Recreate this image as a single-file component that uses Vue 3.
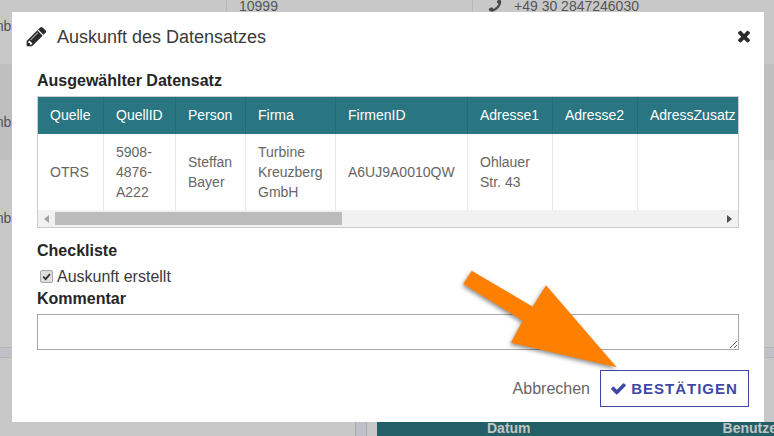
<script setup>
const columns = ['Quelle', 'QuellID', 'Person', 'Firma', 'FirmenID', 'Adresse1', 'Adresse2', 'AdressZusatz']
const widths = [66, 72, 70, 90, 132, 85, 85, 120]
const cells = ['OTRS', '5908-4876-A222', 'Steffan Bayer', 'Turbine Kreuzberg GmbH', 'A6UJ9A0010QW', 'Ohlauer Str. 43', '', '']
</script>

<template>
  <div class="page">
    <!-- page behind the dialog -->
    <div class="rows">
      <div class="row first">
        <div class="col col-name"><span class="cut">GmbH</span></div>
        <div class="col col-zip">10999</div>
        <div class="col col-phone">
          <svg class="phone" viewBox="0 0 1792 1792">
            <path fill="#4a4a4a" d="M1600 1240q0 27-10 70.5t-21 68.5q-21 50-122 106-94 51-186 51-27 0-53-3.5t-57.5-12.5-47-14.5-55.5-20.5-49-18q-98-35-175-83-127-79-264-216t-216-264q-48-77-83-175-3-9-18-49t-20.5-55.5-14.5-47-12.5-57.5-3.5-53q0-92 51-186 56-101 106-122 25-11 68.5-21t70.5-10q14 0 21 3 18 6 53 76 11 19 30 54t35 63.5 31 53.5q3 4 17.5 25t21.5 35.5 7 28.5q0 20-28.5 50t-62 55-62 53-28.5 46q0 9 5 22.5t8.5 20.5 14 24 11.5 19q76 137 174 235t235 174q2 1 19 11.5t24 14 20.5 8.5 22.5 5q18 0 46-28.5t53-62 55-62 50-28.5q14 0 28.5 7t35.5 21.5 25 17.5q25 15 53.5 31t63.5 35 54 30q70 35 76 53 3 7 3 21z" />
          </svg>
          <span>+49 30 2847246030</span>
        </div>
      </div>
      <div class="row band"><span class="cut">GmbH</span></div>
      <div class="row"><span class="cut">GmbH</span></div>
      <div class="spacer-a"></div>
      <div class="strip"></div>
      <div class="spacer-b"></div>
      <div class="bottom">
        <div class="bottom-side"><i></i></div>
        <div class="bottom-head">
          <span>Datum</span>
          <span>Benutzer</span>
        </div>
      </div>
    </div>

    <div class="dialog">
      <header class="dialog-head">
        <svg class="pencil" viewBox="0 0 1792 1792">
          <path fill="#2b2b2b" d="M491 1536l91-91-235-235-91 91v107h128v128h107zm523-928q0-22-22-22-10 0-17 7l-542 542q-7 7-7 17 0 22 22 22 10 0 17-7l542-542q7-7 7-17zm-54-192l416 416-832 832h-416v-416zm683 96q0 53-37 90l-166 166-416-416 166-165q36-38 90-38 53 0 91 38l235 234q37 39 37 91z" />
        </svg>
        <span class="title">Auskunft des Datensatzes</span>
        <svg class="close" viewBox="0 0 1792 1792">
          <path fill="#2b2b2b" d="M1490 1322q0 40-28 68l-136 136q-28 28-68 28t-68-28l-294-294-294 294q-28 28-68 28t-68-28l-136-136q-28-28-28-68t28-68l294-294-294-294q-28-28-28-68t28-68l136-136q28-28 68-28t68 28l294 294 294-294q28-28 68-28t68 28l136 136q28 28 28 68t-28 68l-294 294 294 294q28 28 28 68z" />
        </svg>
      </header>

      <h3 class="label selected">Ausgewählter Datensatz</h3>
      <div class="table-box">
        <div class="table-clip">
          <table>
            <colgroup>
              <col v-for="(w, i) in widths" :key="i" :style="{ width: w + 'px' }" />
            </colgroup>
            <thead>
              <tr><th v-for="c in columns" :key="c">{{ c }}</th></tr>
            </thead>
            <tbody>
              <tr><td v-for="(c, i) in cells" :key="i">{{ c }}</td></tr>
            </tbody>
          </table>
        </div>
        <div class="scrollbar">
          <span class="arrow"><i class="tri-left"></i></span>
          <span class="thumb"></span>
          <span class="track"></span>
          <span class="arrow"><i class="tri-right"></i></span>
        </div>
      </div>

      <h3 class="label check-title">Checkliste</h3>
      <label class="check-row">
        <span class="box">
          <svg viewBox="0 0 12 12"><path d="M2.4 6.2 5 8.8 9.8 3.4" fill="none" stroke="#333" stroke-width="2" /></svg>
        </span>
        Auskunft erstellt
      </label>
      <h3 class="label comment-title">Kommentar</h3>
      <textarea class="comment"></textarea>

      <footer class="dialog-foot">
        <span class="cancel">Abbrechen</span>
        <button class="confirm" type="button">
          <svg class="tick" viewBox="0 0 1792 1792">
            <path fill="#3f48a5" d="M1671 566q0 40-28 68l-724 724-136 136q-28 28-68 28t-68-28l-136-136-362-362q-28-28-28-68t28-68l136-136q28-28 68-28t68 28l294 295 656-657q28-28 68-28t68 28l136 136q28 28 28 68z" />
          </svg>
          BESTÄTIGEN
        </button>
      </footer>
    </div>

    <!-- annotation arrow -->
    <svg class="annotation" viewBox="0 0 774 436">
      <polygon fill="#ff8000" points="471.7,270.7 463.3,284 522.7,320.7 511,342.7 616.7,367.3 546,285.3 532.7,306.7" />
    </svg>
  </div>
</template>

<style scoped>
.page {
  position: relative;
  width: 774px;
  height: 436px;
  overflow: hidden;
  background: #c8c8c8;
  font-family: "Liberation Sans", Arial, sans-serif;
  font-size: 14px;
  color: #555;
}

.rows {
  margin-top: -32px;
}
.rows::before {
  content: "";
  display: table;
}

.row {
  height: 96px;
  box-sizing: border-box;
  padding-top: 48px;
  line-height: 20px;
}
.row.band {
  background: #bfbfbf;
}
.row.first {
  display: flex;
  padding-top: 0;
}
.cut {
  display: block;
  margin-left: -19px;
}

.col {
  box-sizing: border-box;
  padding-top: 48px;
}
.col-name {
  width: 227px;
  border-right: 1px solid #b8b8b8;
}
.col-zip {
  width: 245px;
  padding-top: 28px;
  padding-left: 12px;
}
.col-phone {
  flex: 1;
  display: flex;
  gap: 11px;
  padding-top: 28px;
  padding-left: 14px;
  border-left: 1px solid #b8b8b8;
}
.phone {
  width: 16px;
  height: 16px;
  margin-top: 2px;
  transform: scaleX(-1);
}

.spacer-a {
  height: 91px;
}
.strip {
  height: 11px;
  box-sizing: border-box;
  background: #c0c0c9;
  border-top: 1px solid #b4b4b4;
  border-bottom: 1px solid #b4b4b4;
}
.spacer-b {
  height: 64px;
}

.bottom {
  display: flex;
  height: 14px;
}
.bottom-side {
  flex: none;
  width: 377px;
  padding-left: 355px;
  box-sizing: border-box;
}
.bottom-side i {
  display: block;
  width: 12px;
  height: 14px;
  box-sizing: border-box;
  background: #c0c0c9;
  border-left: 1px solid #a8a8a8;
  border-right: 1px solid #a8a8a8;
}
.bottom-head {
  flex: 1;
  min-width: 0;
  display: flex;
  gap: 192px;
  padding-left: 110px;
  background: #225f66;
  color: #c4c4c4;
  font-weight: bold;
  line-height: 13px;
  white-space: nowrap;
}

.dialog {
  position: absolute;
  left: 12px;
  top: 12px;
  width: 752px;
  height: 410px;
  box-sizing: border-box;
  padding: 13px 25px 0;
  background: #fff;
  color: #333;
}

.dialog-head {
  display: flex;
  align-items: center;
  height: 24px;
}
.pencil {
  flex: none;
  width: 23px;
  height: 23px;
  margin-left: -12px;
  margin-top: -1px;
}
.title {
  margin-left: 9px;
  font-size: 18px;
  color: #3a3a3a;
}
.close {
  width: 18px;
  height: 18px;
  margin-left: auto;
  margin-right: -14px;
  margin-top: -2px;
}

.label {
  margin: 0;
  font-size: 16px;
  line-height: 20px;
  font-weight: bold;
  color: #262626;
}
.selected {
  margin-top: 22px;
  margin-bottom: 5px;
}

.table-box {
  box-sizing: border-box;
  width: 702px;
  border: 1px solid #ccc;
}
.table-clip {
  overflow: hidden;
}
table {
  width: 720px;
  table-layout: fixed;
  border-collapse: separate;
  border-spacing: 0;
  font-size: 14px;
  line-height: 20px;
}
th,
td {
  box-sizing: border-box;
  padding: 0 12px;
  text-align: left;
  font-weight: normal;
  border-right: 1px solid #e8e8e8;
}
th {
  height: 37px;
  padding-bottom: 2px;
  background: #2a7582;
  color: #fff;
  border-right-color: #26697a;
  white-space: nowrap;
}
td {
  height: 76px;
  color: #666;
}

.scrollbar {
  display: flex;
  height: 17px;
  background: #f1f1f1;
}
.arrow {
  display: flex;
  align-items: center;
  justify-content: center;
  flex: none;
  width: 17px;
}
.thumb {
  width: 287px;
  height: 13px;
  margin-top: 2px;
  background: #bcbcbc;
}
.track {
  flex: 1;
}
.tri-left,
.tri-right {
  display: block;
  width: 0;
  height: 0;
  border-top: 4px solid transparent;
  border-bottom: 4px solid transparent;
}
.tri-left {
  border-right: 5px solid #a3a3a3;
}
.tri-right {
  border-left: 5px solid #505050;
}

.check-title {
  margin-top: 13px;
}
.check-row {
  display: flex;
  gap: 4px;
  height: 20px;
  margin-top: 6px;
  line-height: 20px;
  font-size: 16px;
  color: #3a3a3a;
}
.box {
  flex: none;
  box-sizing: border-box;
  width: 13px;
  height: 13px;
  margin: 3px 0 0 3px;
  border: 1px solid #a8a8a8;
  border-radius: 2px;
  background: #dedede;
}
.box svg {
  display: block;
  width: 11px;
  height: 11px;
}
.comment-title {
  margin-top: 2px;
}
.comment {
  display: block;
  box-sizing: border-box;
  width: 702px;
  height: 36px;
  margin: 5px 0 0;
  padding: 2px;
  border: 1px solid #a9a9a9;
  background: #fff;
  outline: none;
}

.dialog-foot {
  display: flex;
  justify-content: flex-end;
  align-items: center;
  gap: 10px;
  margin: 20px -10px 0 0;
}
.cancel {
  font-size: 16px;
  color: #666;
}
.confirm {
  display: flex;
  align-items: center;
  justify-content: center;
  gap: 4px;
  box-sizing: border-box;
  width: 149px;
  height: 37px;
  padding: 0 1px 0 0;
  border: 1px solid #3f48a5;
  background: #fff;
  color: #3f48a5;
  font: bold 15px "Liberation Sans", Arial, sans-serif;
  letter-spacing: 1px;
}
.tick {
  width: 17px;
  height: 17px;
}

.annotation {
  position: absolute;
  left: 0;
  top: 0;
  width: 774px;
  height: 436px;
  pointer-events: none;
  filter: drop-shadow(-1px 2px 2px rgba(0, 0, 0, 0.45));
}
</style>
